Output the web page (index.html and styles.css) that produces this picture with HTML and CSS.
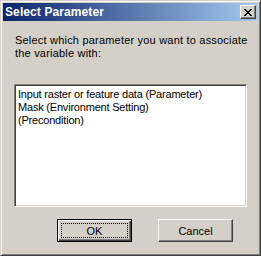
FILE: index.html
```html
<!DOCTYPE html>
<html>
<head>
<meta charset="utf-8">
<link rel="stylesheet" href="styles.css">
</head>
<body>
<div class="window">
  <div class="titlebar">
    <span class="title">Select Parameter</span>
    <button class="close" aria-label="Close">
      <svg width="8" height="7" viewBox="0 0 8 7"><path d="M0 0h2v1h1v1h2v-1h1v-1h2v1h-1v1h-1v1h-1v1h1v1h1v1h1v1h-2v-1h-1v-1h-2v1h-1v1h-2v-1h1v-1h1v-1h1v-1h-1v-1h-1v-1h-1z" fill="#000"/></svg>
    </button>
  </div>
  <div class="content">
    <p class="prompt">Select which parameter you want to associate<br>the variable with:</p>
    <div class="listbox">
      <div class="item">Input raster or feature data (Parameter)</div>
      <div class="item">Mask (Environment Setting)</div>
      <div class="item">(Precondition)</div>
    </div>
    <div class="buttons">
      <button class="btn default"><span class="focus">OK</span></button>
      <button class="btn">Cancel</button>
    </div>
  </div>
</div>
</body>
</html>
```
FILE: styles.css
```css
html, body {
  margin: 0;
  padding: 0;
  background: #d4d0c8;
}
.window {
  width: 261px;
  height: 256px;
  box-sizing: border-box;
  background: #d4d0c8;
  border: 1px solid;
  border-color: #d4d0c8 #404040 #404040 #d4d0c8;
  box-shadow: inset 1px 1px #fff, inset -1px -1px #808080;
  padding: 2px;
  display: flex;
  flex-direction: column;
  font-family: "Liberation Sans", Arial, sans-serif;
  font-size: 11px;
  color: #000;
}
.titlebar {
  height: 18px;
  flex: none;
  display: flex;
  align-items: center;
  justify-content: space-between;
  background: linear-gradient(90deg, #0a246a, #a6caf0);
  padding: 0 2px 0 2px;
}
.title {
  color: #fff;
  font-weight: bold;
  font-size: 12px;
  letter-spacing: 0.1px;
}
.close {
  width: 16px;
  height: 14px;
  padding: 0;
  margin: 0;
  box-sizing: border-box;
  background: #d4d0c8;
  border: 1px solid;
  border-color: #fff #404040 #404040 #fff;
  box-shadow: inset -1px -1px #808080;
  display: flex;
  align-items: center;
  justify-content: center;
}
.close svg {
  display: block;
}
.content {
  flex: 1;
  display: flex;
  flex-direction: column;
  padding: 13px 0 0 11px;
}
.prompt {
  margin: 0 0 0 1px;
  line-height: 13px;
  letter-spacing: 0.2px;
}
.listbox {
  margin-top: 24px;
  width: 233px;
  height: 123px;
  box-sizing: border-box;
  background: #fff;
  border: 1px solid;
  border-color: #808080 #fff #fff #808080;
  box-shadow: inset 1px 1px #404040, inset -1px -1px #d4d0c8;
  padding: 3px 0 0 3px;
}
.item {
  line-height: 13px;
  white-space: nowrap;
  letter-spacing: -0.2px;
}
.buttons {
  display: flex;
  gap: 26px;
  margin-top: 12px;
  padding-left: 43px;
}
.btn {
  width: 75px;
  height: 23px;
  box-sizing: border-box;
  padding: 0;
  margin: 0;
  font-family: "Liberation Sans", Arial, sans-serif;
  font-size: 11px;
  color: #000;
  background: #d4d0c8;
  border: 1px solid;
  border-color: #fff #404040 #404040 #fff;
  box-shadow: inset -1px -1px #808080;
  display: flex;
  align-items: center;
  justify-content: center;
}
.btn.default {
  border: 1px solid #000;
  box-shadow: inset 1px 1px #fff, inset -1px -1px #404040, inset -2px -2px #808080;
  padding: 3px;
}
.focus {
  flex: 1;
  align-self: stretch;
  display: flex;
  align-items: center;
  justify-content: center;
  border: 1px dotted #000;
}
```
